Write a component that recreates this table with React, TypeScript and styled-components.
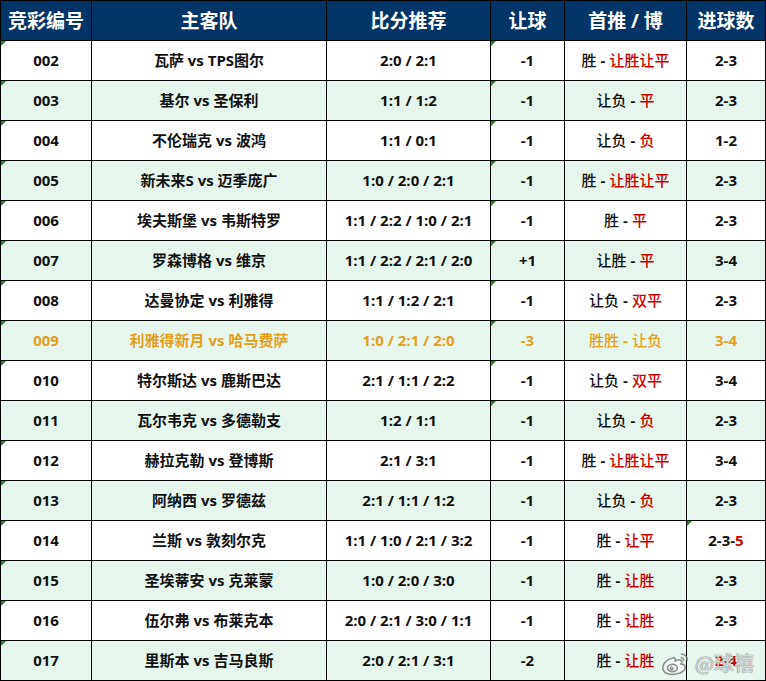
import React from "react";
import styled, { createGlobalStyle } from "styled-components";

const Global = createGlobalStyle`
  html, body { margin: 0; padding: 0; background: #ffffff; }
  body { font-family: "Open Sans", "Noto Sans CJK SC", sans-serif; }
`;

const Wrap = styled.div`
  position: relative;
  width: 766px;
`;

const Grid = styled.div`
  display: grid;
  grid-template-columns: 90px 234px 163px 73px 121px 78px;
  grid-auto-rows: 39px;
  gap: 1px;
  padding: 1px;
  background: #000;
  width: 766px;
  box-sizing: border-box;
`;

const Head = styled.div`
  background: #013467;
  color: #fff;
  font-family: "Open Sans", "Noto Sans CJK SC", sans-serif;
  font-weight: 700;
  font-size: 19px;
  display: flex;
  align-items: center;
  justify-content: center;
  padding-bottom: 2px;
  white-space: nowrap;
`;

const Cell = styled.div<{ $alt: boolean; $hl: boolean; $tri?: boolean; $light?: boolean }>`
  position: relative;
  background: ${(p) => (p.$alt ? "#e6f6ed" : "#ffffff")};
  color: ${(p) => (p.$hl ? "#e39e1c" : "#111")};
  font-family: "Open Sans", "Noto Sans CJK SC", sans-serif;
  font-weight: ${(p) => (p.$light ? 500 : 700)};
  font-size: 15px;
  display: flex;
  align-items: center;
  justify-content: center;
  padding-bottom: 2px;
  white-space: nowrap;
  &::before {
    content: "";
    display: ${(p) => (p.$tri ? "block" : "none")};
    position: absolute;
    left: 0;
    top: 0;
    border-top: 5px solid #1a8a1a;
    border-right: 5px solid transparent;
  }
`;

const Red = styled.span<{ $hl: boolean }>`
  color: ${(p) => (p.$hl ? "#e39e1c" : "#cc0000")};
`;

const Dash = styled.span`
  font-weight: 700;
  margin: 0 4px;
`;

const Watermark = styled.div`
  position: absolute;
  right: 12px;
  bottom: 4px;
  display: flex;
  align-items: center;
  gap: 4px;
  color: rgba(255, 255, 255, 0.75);
  font-family: "Noto Sans CJK SC", sans-serif;
  font-size: 20px;
  font-weight: 400;
  text-shadow: 0 0 1px rgba(90, 90, 90, 0.8), 0 0 1px rgba(90, 90, 90, 0.8);
  pointer-events: none;
`;

type Row = {
  id: string;
  teams: string;
  score: string;
  hcp: string;
  first: string;
  second: string;
  goals: string;
  goalsRed?: string;
  hl?: boolean;
  triId?: boolean;
  triHcp?: boolean;
  triGoals?: boolean;
};

const rows: Row[] = [
  { id: "002", teams: "瓦萨 vs TPS图尔", score: "2:0 / 2:1", hcp: "-1", first: "胜", second: "让胜让平", goals: "2-3", triId: true, triHcp: true },
  { id: "003", teams: "基尔 vs 圣保利", score: "1:1 / 1:2", hcp: "-1", first: "让负", second: "平", goals: "2-3", triId: true, triHcp: true },
  { id: "004", teams: "不伦瑞克 vs 波鸿", score: "1:1 / 0:1", hcp: "-1", first: "让负", second: "负", goals: "1-2", triId: true, triHcp: true },
  { id: "005", teams: "新未来S vs 迈季庞广", score: "1:0 / 2:0 / 2:1", hcp: "-1", first: "胜", second: "让胜让平", goals: "2-3", triId: true, triHcp: true },
  { id: "006", teams: "埃夫斯堡 vs 韦斯特罗", score: "1:1 / 2:2 / 1:0 / 2:1", hcp: "-1", first: "胜", second: "平", goals: "2-3", triId: true, triHcp: true },
  { id: "007", teams: "罗森博格 vs 维京", score: "1:1 / 2:2 / 2:1 / 2:0", hcp: "+1", first: "让胜", second: "平", goals: "3-4", triId: true, triHcp: true },
  { id: "008", teams: "达曼协定 vs 利雅得", score: "1:1 / 1:2 / 2:1", hcp: "-1", first: "让负", second: "双平", goals: "2-3", triId: true, triHcp: true },
  { id: "009", teams: "利雅得新月 vs 哈马费萨", score: "1:0 / 2:1 / 2:0", hcp: "-3", first: "胜胜", second: "让负", goals: "3-4", hl: true, triId: true, triHcp: true },
  { id: "010", teams: "特尔斯达 vs 鹿斯巴达", score: "2:1 / 1:1 / 2:2", hcp: "-1", first: "让负", second: "双平", goals: "3-4", triId: true, triHcp: true },
  { id: "011", teams: "瓦尔韦克 vs 多德勒支", score: "1:2 / 1:1", hcp: "-1", first: "让负", second: "负", goals: "2-3", triId: false, triHcp: true },
  { id: "012", teams: "赫拉克勒 vs 登博斯", score: "2:1 / 3:1", hcp: "-1", first: "胜", second: "让胜让平", goals: "3-4", triId: true },
  { id: "013", teams: "阿纳西 vs 罗德兹", score: "2:1 / 1:1 / 1:2", hcp: "-1", first: "让负", second: "负", goals: "2-3", triId: true },
  { id: "014", teams: "兰斯 vs 敦刻尔克", score: "1:1 / 1:0 / 2:1 / 3:2", hcp: "-1", first: "胜", second: "让平", goals: "2-3-", goalsRed: "5", triId: true, triGoals: true },
  { id: "015", teams: "圣埃蒂安 vs 克莱蒙", score: "1:0 / 2:0 / 3:0", hcp: "-1", first: "胜", second: "让胜", goals: "2-3", triId: true },
  { id: "016", teams: "伍尔弗 vs 布莱克本", score: "2:0 / 2:1 / 3:0 / 1:1", hcp: "-1", first: "胜", second: "让胜", goals: "2-3", triId: true },
  { id: "017", teams: "里斯本 vs 吉马良斯", score: "2:0 / 2:1 / 3:1", hcp: "-2", first: "胜", second: "让胜", goals: "", goalsRed: "2-4", triId: true },
];

const headers = ["竞彩编号", "主客队", "比分推荐", "让球", "首推 / 博", "进球数"];

function WeiboLogo() {
  return (
    <svg width="30" height="26" viewBox="0 0 30 26" fill="none" stroke="rgba(110,110,110,0.75)" strokeWidth="1.6">
      <path d="M12 8c-6 1-11 6-10 11 1 5 8 6 13 5 6-1 10-4 9-8-1-2-3-2-4-2 1-2 1-4-1-4-2-1-4 1-5 1 1-3-1-4-2-3z" fill="rgba(255,255,255,0.6)" />
      <ellipse cx="11.5" cy="18" rx="5" ry="3.6" />
      <circle cx="10.5" cy="18.5" r="1.3" />
      <path d="M20 4c4 0 7 3 6 7" />
      <path d="M19.5 7.5c2 0 3.5 1.5 3 3.5" />
    </svg>
  );
}

export default function App() {
  return (
    <Wrap>
      <Global />
      <Grid>
        {headers.map((h) => (
          <Head key={h}>{h}</Head>
        ))}
        {rows.map((r, i) => {
          const alt = i % 2 === 1;
          const hl = !!r.hl;
          return (
            <React.Fragment key={r.id}>
              <Cell $alt={alt} $hl={hl} $tri={r.triId}>{r.id}</Cell>
              <Cell $alt={alt} $hl={hl}>{r.teams}</Cell>
              <Cell $alt={alt} $hl={hl}>{r.score}</Cell>
              <Cell $alt={alt} $hl={hl} $tri={r.triHcp}>{r.hcp}</Cell>
              <Cell $alt={alt} $hl={hl} $light>
                {r.first}
                <Dash>-</Dash>
                <Red $hl={hl}>{r.second}</Red>
              </Cell>
              <Cell $alt={alt} $hl={hl} $tri={r.triGoals}>
                {r.goals}
                {r.goalsRed ? <Red $hl={hl}>{r.goalsRed}</Red> : null}
              </Cell>
            </React.Fragment>
          );
        })}
      </Grid>
      <Watermark>
        <WeiboLogo />
        <span>@球禧</span>
      </Watermark>
    </Wrap>
  );
}
